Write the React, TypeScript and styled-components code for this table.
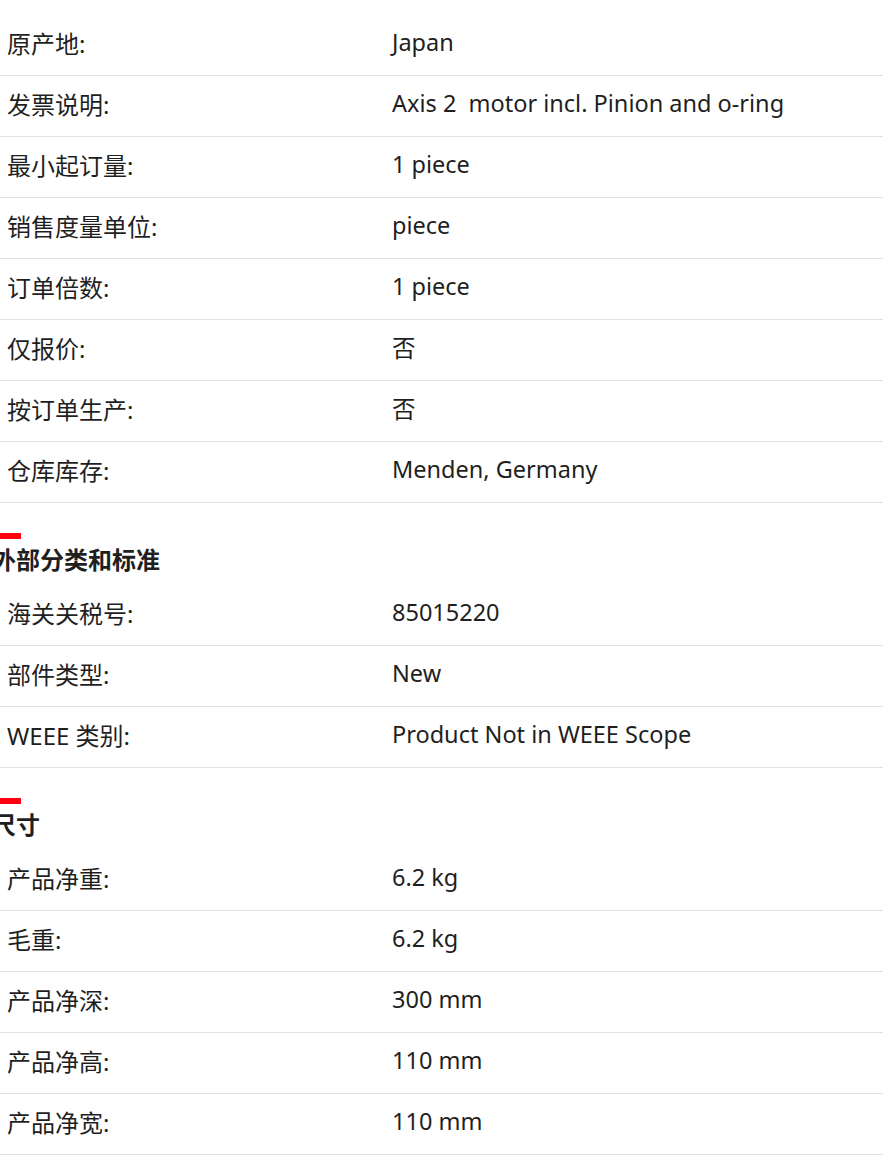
import styled, { createGlobalStyle } from 'styled-components'

const GlobalStyle = createGlobalStyle`
    html, body {
        margin: 0;
        padding: 0;
        background: #fff;
    }
    body {
        font-family: 'Noto Sans', 'Noto Sans CJK SC', sans-serif;
        color: #1f1f1f;
        overflow: hidden;
    }
`

type Spec = [string, string]

const sections: { title?: string; rows: Spec[] }[] = [
    {
        rows: [
            ['原产地:', 'Japan'],
            ['发票说明:', 'Axis 2  motor incl. Pinion and o-ring'],
            ['最小起订量:', '1 piece'],
            ['销售度量单位:', 'piece'],
            ['订单倍数:', '1 piece'],
            ['仅报价:', '否'],
            ['按订单生产:', '否'],
            ['仓库库存:', 'Menden, Germany'],
        ],
    },
    {
        title: '外部分类和标准',
        rows: [
            ['海关关税号:', '85015220'],
            ['部件类型:', 'New'],
            ['WEEE 类别:', 'Product Not in WEEE Scope'],
        ],
    },
    {
        title: '尺寸',
        rows: [
            ['产品净重:', '6.2 kg'],
            ['毛重:', '6.2 kg'],
            ['产品净深:', '300 mm'],
            ['产品净高:', '110 mm'],
            ['产品净宽:', '110 mm'],
        ],
    },
]

export default function App() {
    return (
        <Page>
            <GlobalStyle />
            {sections.map((section, i) => (
                <Section key={i}>
                    {section.title && (
                        <Heading>
                            <RedBar />
                            <Title>{section.title}</Title>
                        </Heading>
                    )}
                    <Table>
                        {section.rows.map(([label, value]) => (
                            <Row key={label}>
                                <Label>{label}</Label>
                                <Value>{value}</Value>
                            </Row>
                        ))}
                    </Table>
                </Section>
            ))}
        </Page>
    )
}

const Page = styled.div`
    width: 883px;
    padding-top: 15px;
`

const Section = styled.section`
    & + & {
        margin-top: 30px;
    }
`

const Heading = styled.div`
    margin-left: -8px;
    margin-bottom: 11px;
`

const RedBar = styled.div`
    width: 29px;
    height: 6px;
    background: #ff000f;
`

const Title = styled.h2`
    margin: 5px 0 0;
    font-size: 24px;
    line-height: 30px;
    font-weight: 700;
    font-family: 'Noto Sans CJK SC', sans-serif;
    color: #1f1f1f;
`

const Table = styled.div`
    display: flex;
    flex-direction: column;
`

const Row = styled.div`
    display: grid;
    grid-template-columns: 392px 1fr;
    align-items: center;
    height: 54px;
    padding-bottom: 6px;
    border-bottom: 1px solid #e0e0e0;
`

const Label = styled.div`
    padding-left: 7px;
    font-family: 'Noto Sans', 'Noto Sans CJK SC', sans-serif;
    font-size: 24px;
`

const Value = styled.div`
    font-family: 'Noto Sans', 'Noto Sans CJK SC', sans-serif;
    font-size: 23.5px;
    white-space: pre;
`
